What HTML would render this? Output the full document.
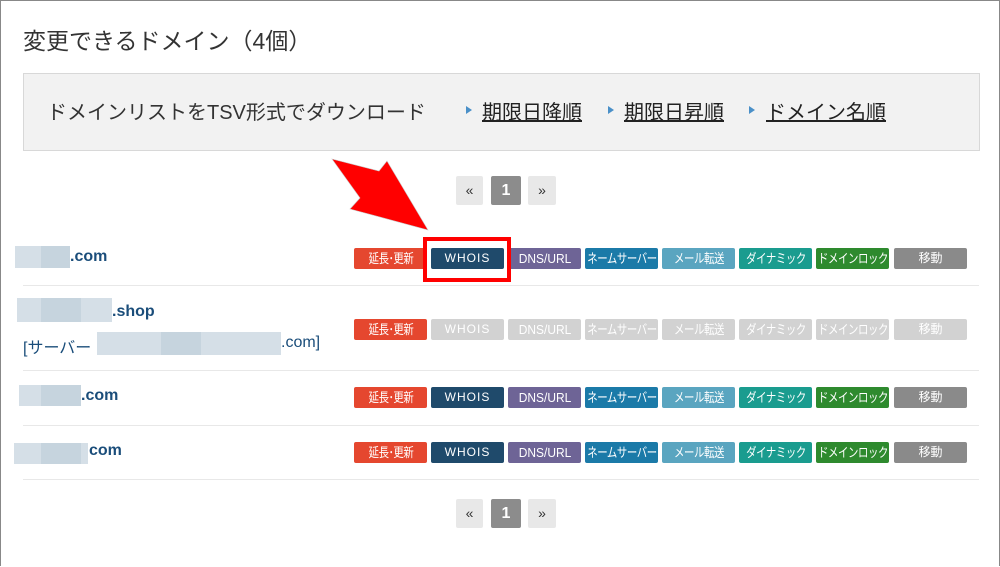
<!DOCTYPE html>
<html><head><meta charset="utf-8"><style>
*{margin:0;padding:0;box-sizing:border-box}
body{width:1000px;height:566px;background:#fff;position:relative;overflow:hidden;font-family:"Liberation Sans","Noto Sans CJK JP",sans-serif;border:1px solid #888;border-bottom:none}
.abs{position:absolute}
h1{position:absolute;left:22px;top:21px;font-size:23px;font-weight:normal;color:#333;white-space:nowrap}
.panel{position:absolute;left:22px;top:72px;width:957px;height:78px;background:#f2f2f2;border:1px solid #d8d8d8}
.panel .t{position:absolute;left:23px;top:22px;font-size:20px;color:#333;white-space:nowrap}
.lk{position:absolute;top:22px;font-size:20px;color:#222;text-decoration:underline;white-space:nowrap}
.tri{position:absolute;top:32px;width:0;height:0;border-left:6px solid #4a90c8;border-top:4px solid transparent;border-bottom:4px solid transparent}
.pg{position:absolute;height:29px;font-size:14px;text-align:center;line-height:29px;border-radius:2px}
.pg.a{background:#e8e8e8;color:#333}
.pg.c{background:#8c8c8c;color:#fff;font-weight:bold;font-size:16px}
.b{position:absolute;width:73px;height:21px;border-radius:2px;color:#fff;font-size:12px;text-align:center;line-height:21px;white-space:nowrap;overflow:hidden}
.s span{position:absolute;left:50%;top:0;font-size:13px;letter-spacing:-0.5px;transform:translateX(-50%) scaleX(0.8)}
.d span{position:absolute;left:50%;top:0;font-size:13px;transform:translateX(-50%) scaleX(0.92)}
.dom{position:absolute;font-size:16px;font-weight:bold;color:#1a4d7a}
.blur{position:absolute;background:#d5dfe7}
.blur2{position:absolute;background:#c6d4de}
.sep{position:absolute;left:22px;width:956px;height:1px;background:#e8e8e8}
</style></head><body>
<h1>変更できるドメイン（4個）</h1>
<div class="panel">
<div class="t">ドメインリストをTSV形式でダウンロード</div>
<div class="tri" style="left:442px"></div><div class="lk" style="left:458px">期限日降順</div>
<div class="tri" style="left:584px"></div><div class="lk" style="left:600px">期限日昇順</div>
<div class="tri" style="left:725px"></div><div class="lk" style="left:742px">ドメイン名順</div>
</div>
<div class="pg a" style="left:455px;top:175px;width:27px">«</div>
<div class="pg c" style="left:490px;top:175px;width:30px">1</div>
<div class="pg a" style="left:527px;top:175px;width:28px">»</div>
<div class="pg a" style="left:455px;top:498px;width:27px">«</div>
<div class="pg c" style="left:490px;top:498px;width:30px">1</div>
<div class="pg a" style="left:527px;top:498px;width:28px">»</div>

<div class="blur" style="left:14px;top:245px;width:55px;height:22px"></div><div class="blur2" style="left:40px;top:245px;width:29px;height:22px"></div>
<div class="dom" style="left:69px;top:247px">.com</div>
<div class="sep" style="top:284px"></div>
<div class="blur" style="left:16px;top:297px;width:95px;height:24px"></div><div class="blur2" style="left:40px;top:297px;width:40px;height:24px"></div>
<div class="dom" style="left:111px;top:302px">.shop</div>
<div class="abs" style="left:22px;top:333px;font-size:16px;color:#1a4d7a">[サーバー</div>
<div class="blur" style="left:96px;top:331px;width:184px;height:23px"></div><div class="blur2" style="left:160px;top:331px;width:40px;height:23px"></div>
<div class="abs" style="left:280px;top:333px;font-size:16px;color:#1a4d7a">.com]</div>
<div class="sep" style="top:369px"></div>
<div class="blur" style="left:18px;top:384px;width:62px;height:21px"></div><div class="blur2" style="left:40px;top:384px;width:40px;height:21px"></div>
<div class="dom" style="left:80px;top:386px">.com</div>
<div class="sep" style="top:424px"></div>
<div class="blur" style="left:13px;top:442px;width:74px;height:21px"></div><div class="blur2" style="left:40px;top:442px;width:40px;height:21px"></div>
<div class="dom" style="left:88px;top:441px">com</div>
<div class="sep" style="top:478px"></div>

<div class="b s" style="left:353px;top:247px;background:#e5472f"><span>延長･更新</span></div>
<div class="b" style="left:430px;top:247px;background:#1f4a6b;letter-spacing:1px">WHOIS</div>
<div class="b d" style="left:507px;top:247px;background:#6e6496"><span>DNS/URL</span></div>
<div class="b s" style="left:584px;top:247px;background:#1b7aa8"><span>ネームサーバー</span></div>
<div class="b s" style="left:661px;top:247px;background:#5aa5c0"><span>メール転送</span></div>
<div class="b s" style="left:738px;top:247px;background:#1a9c8f"><span>ダイナミック</span></div>
<div class="b s" style="left:815px;top:247px;background:#2e8a2e"><span>ドメインロック</span></div>
<div class="b" style="left:893px;top:247px;background:#8a8a8a">移動</div>

<div class="b s" style="left:353px;top:318px;background:#e5472f"><span>延長･更新</span></div>
<div class="b" style="left:430px;top:318px;background:#d2d2d2;letter-spacing:1px">WHOIS</div>
<div class="b d" style="left:507px;top:318px;background:#d2d2d2"><span>DNS/URL</span></div>
<div class="b s" style="left:584px;top:318px;background:#d2d2d2"><span>ネームサーバー</span></div>
<div class="b s" style="left:661px;top:318px;background:#d2d2d2"><span>メール転送</span></div>
<div class="b s" style="left:738px;top:318px;background:#d2d2d2"><span>ダイナミック</span></div>
<div class="b s" style="left:815px;top:318px;background:#d2d2d2"><span>ドメインロック</span></div>
<div class="b" style="left:893px;top:318px;background:#d2d2d2">移動</div>

<div class="b s" style="left:353px;top:386px;background:#e5472f"><span>延長･更新</span></div>
<div class="b" style="left:430px;top:386px;background:#1f4a6b;letter-spacing:1px">WHOIS</div>
<div class="b d" style="left:507px;top:386px;background:#6e6496"><span>DNS/URL</span></div>
<div class="b s" style="left:584px;top:386px;background:#1b7aa8"><span>ネームサーバー</span></div>
<div class="b s" style="left:661px;top:386px;background:#5aa5c0"><span>メール転送</span></div>
<div class="b s" style="left:738px;top:386px;background:#1a9c8f"><span>ダイナミック</span></div>
<div class="b s" style="left:815px;top:386px;background:#2e8a2e"><span>ドメインロック</span></div>
<div class="b" style="left:893px;top:386px;background:#8a8a8a">移動</div>

<div class="b s" style="left:353px;top:441px;background:#e5472f"><span>延長･更新</span></div>
<div class="b" style="left:430px;top:441px;background:#1f4a6b;letter-spacing:1px">WHOIS</div>
<div class="b d" style="left:507px;top:441px;background:#6e6496"><span>DNS/URL</span></div>
<div class="b s" style="left:584px;top:441px;background:#1b7aa8"><span>ネームサーバー</span></div>
<div class="b s" style="left:661px;top:441px;background:#5aa5c0"><span>メール転送</span></div>
<div class="b s" style="left:738px;top:441px;background:#1a9c8f"><span>ダイナミック</span></div>
<div class="b s" style="left:815px;top:441px;background:#2e8a2e"><span>ドメインロック</span></div>
<div class="b" style="left:893px;top:441px;background:#8a8a8a">移動</div>

<div class="abs" style="left:422px;top:236px;width:88px;height:45px;border:4px solid #f00"></div>
<svg class="abs" style="left:0;top:0" width="1000" height="566"><polygon points="331,158 378,170 386,160 427,229 349,208 359,197" fill="#f00" stroke="#c8c8c8" stroke-width="0.6"/></svg>
</body></html>
